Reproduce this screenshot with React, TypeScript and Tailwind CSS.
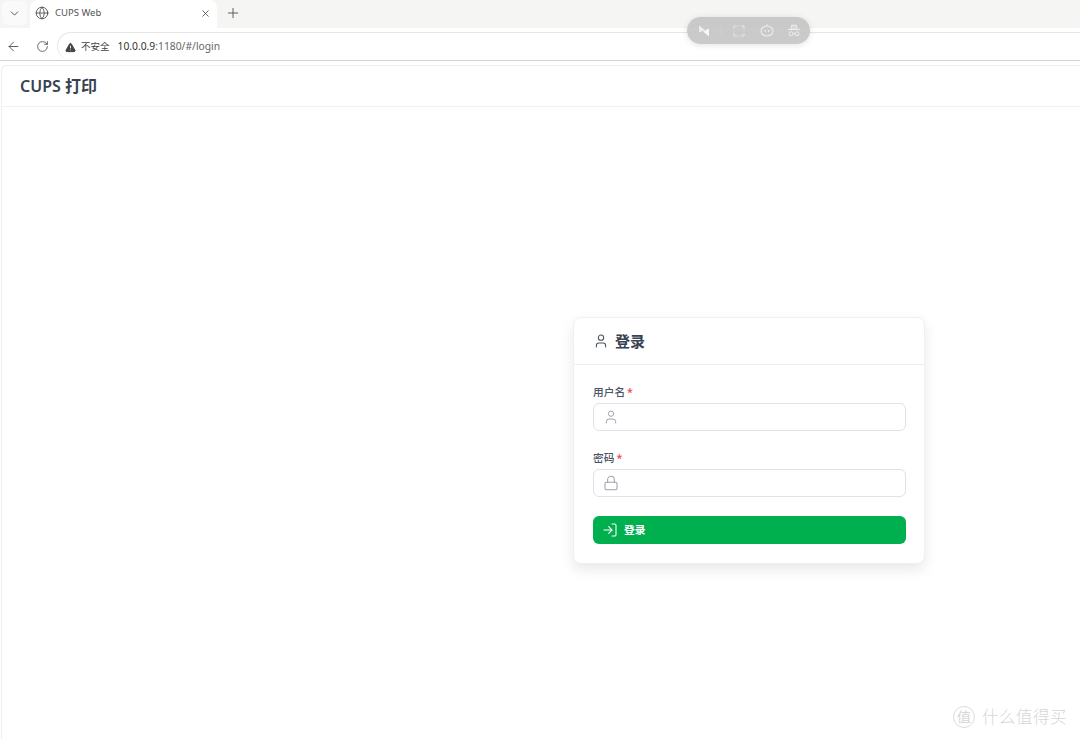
import { ArrowLeft, ChevronDown, Globe, Lock, LogIn, Plus, RotateCw, TriangleAlert, User, X } from 'lucide-react';

const SANS = 'font-["Noto_Sans","Noto_Sans_CJK_SC",sans-serif]';

function BrowserChrome() {
  return (
    <div className="shrink-0">
      {/* tab strip */}
      <div className="flex h-[28px] items-start bg-[#f5f5f3]">
        <div className="ml-[2px] mt-[1px] flex h-[24px] w-[25px] items-center justify-center rounded-md bg-[#fafafa]">
          <ChevronDown size={13} strokeWidth={1.8} className="text-[#555]" />
        </div>
        <div className="ml-[3px] flex h-[28px] w-[187px] items-center rounded-t-lg bg-white pb-[2px] pl-[5px] pr-[6px]">
          <Globe size={14} strokeWidth={1.4} className="text-[#444]" />
          <span className="ml-[6px] flex-1 text-[9.5px] text-[#555]">CUPS Web</span>
          <X size={11} strokeWidth={1.8} className="text-[#444]" />
        </div>
        <div className="ml-[8px] flex h-[25px] items-center">
          <Plus size={16} strokeWidth={1.4} className="text-[#555]" />
        </div>
      </div>
      {/* address bar */}
      <div className="flex h-[33px] items-end border-b border-[#d2d2d2] bg-white pl-[6px]">
        <div className="flex h-[28px] items-center pt-[1px]">
          <ArrowLeft size={15} strokeWidth={1.5} className="text-[#555]" />
          <RotateCw size={13} strokeWidth={1.6} className="ml-[15px] text-[#555]" />
        </div>
        <div className="ml-[8px] flex h-[28px] flex-1 items-center rounded-l-full border border-b-0 border-r-0 border-[#e6e6e6] pl-[7px] pt-[1px]">
          <TriangleAlert size={11} strokeWidth={2} fill="#444" className="text-[#444] [&>path:nth-child(n+2)]:stroke-white" />
          <span className="ml-[5px] text-[9.5px] text-[#444]">不安全</span>
          <span className="ml-[8px] text-[10.3px] text-[#333]">10.0.0.9<span className="text-[#666]">:1180/#/login</span></span>
        </div>
      </div>
    </div>
  );
}

function Field({ label, icon }: { label: string; icon: React.ReactNode }) {
  return (
    <div>
      <div className="flex h-[14px] items-center text-[10.7px] font-medium leading-none text-[#4b5563]">
        {label}
        <span className="ml-[2px] text-[#ef4444]">*</span>
      </div>
      <div className="mt-[4px] flex h-[28px] items-center rounded-md border border-[#dfe2e6] bg-white pl-[9px]">
        {icon}
      </div>
    </div>
  );
}

export default function App() {
  return (
    <div className={`relative flex h-[739px] w-[1080px] flex-col overflow-hidden bg-white ${SANS}`}>
      <BrowserChrome />

      <div className="ml-px mt-[4px] flex flex-1 flex-col rounded-tl-md border-l border-t border-[#eeeeee] bg-white">
        <header className="flex h-[41px] shrink-0 items-center border-b border-[#f1f1f1] pl-[18px] text-[16px] font-semibold text-[#374151]">
          CUPS 打印
        </header>

        <main className="flex flex-1 items-start justify-end pr-[155px] pt-[210px]">
          <div className="w-[352px] rounded-lg border border-[#f0f0f0] bg-white shadow-[0_6px_14px_rgba(0,0,0,0.09)]">
            <div className="flex h-[47px] items-center gap-[6px] border-b border-[#eeeeee] pl-[19px]">
              <User size={16} strokeWidth={1.6} className="text-[#4b5563]" />
              <span className="text-[15px] font-semibold text-[#374151]">登录</span>
            </div>
            <div className="pb-[19px] pl-[19px] pr-[18px] pt-[20px]">
              <div className="flex flex-col gap-[20px]">
                <Field label="用户名" icon={<User size={16} strokeWidth={1.5} className="text-[#9ca3af]" />} />
                <Field label="密码" icon={<Lock size={16} strokeWidth={1.6} className="text-[#9ca3af]" />} />
              </div>
              <button className="mt-[19px] flex h-[28px] w-full items-center gap-[6px] rounded-md bg-[#00b04f] pl-[9px] text-[10.7px] font-semibold text-white">
                <LogIn size={16} strokeWidth={1.6} />
                登录
              </button>
            </div>
          </div>
        </main>
      </div>

      {/* floating capture toolbar */}
      <div className="absolute left-[687px] top-[17px] flex h-[27px] w-[123px] items-center rounded-full bg-[#c4c4c4]/90 pl-[11px] shadow-[0_1px_6px_rgba(0,0,0,0.12)]">
        <svg width="12" height="12" viewBox="0 0 12 12" fill="#eeeeee">
          <path d="M1 0.5 L7 5 L1 7.5 Z" />
          <path d="M11 3.5 L5 6.5 L11 11.5 Z" fill="#f6f6f6" />
        </svg>
        <div className="ml-[11px] h-[10px] w-px bg-[#d0d0d0]" />
        <svg width="12" height="12" viewBox="0 0 12 12" fill="none" stroke="#e6e6e6" strokeWidth="1" className="ml-[11px]">
          <path d="M1 4V1H4M8 1H11V4M11 8V11H8M4 11H1V8" />
          <path d="M5 1H7M5 11H7M1 5.5V6.5M11 5.5V6.5" stroke="#dadada" />
        </svg>
        <svg width="14" height="13" viewBox="0 0 14 13" fill="none" stroke="#eeeeee" strokeWidth="1.1" className="ml-[15px]">
          <ellipse cx="7" cy="7" rx="6" ry="5" />
          <path d="M7 2V0.5" />
          <path d="M5.3 6v2M8.7 6v2" />
        </svg>
        <svg width="14" height="13" viewBox="0 0 14 13" fill="none" stroke="#eeeeee" strokeWidth="1" className="ml-[13px]">
          <path d="M4 5 L4.6 1.2H9.4L10 5" fill="#eeeeee" fillOpacity="0.4" />
          <path d="M1 5.5H13" />
          <circle cx="4" cy="9.8" r="2" />
          <circle cx="10" cy="9.8" r="2" />
          <path d="M6 9.5H8" />
        </svg>
      </div>

      {/* site watermark */}
      <div className="absolute left-[953px] top-[706px] flex items-center text-[#d6d6d6]">
        <div className="flex h-[22px] w-[22px] items-center justify-center rounded-full border border-[#dcdcdc] text-[14px] leading-none">值</div>
        <span className="ml-[7px] text-[16.5px] font-light leading-none tracking-[0.5px]">什么值得买</span>
      </div>
    </div>
  );
}
